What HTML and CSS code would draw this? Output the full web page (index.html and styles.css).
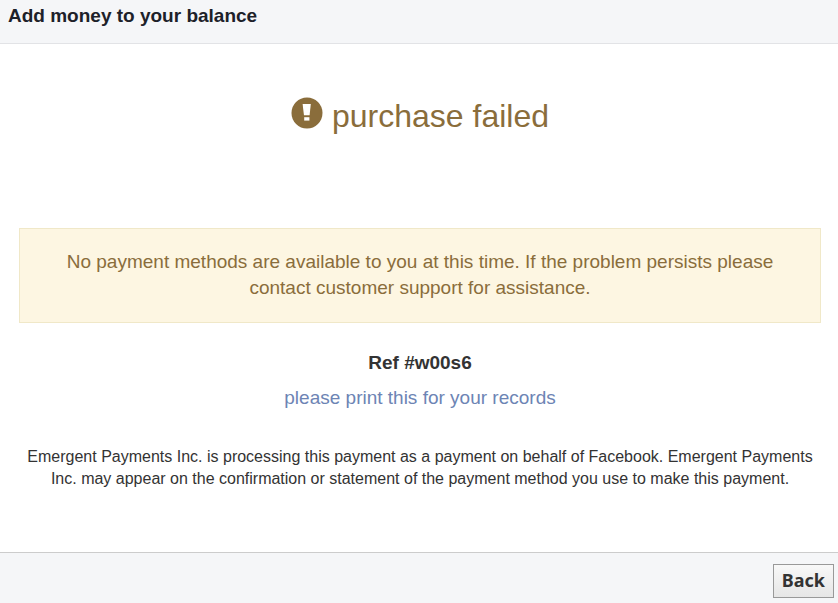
FILE: index.html
```html
<!DOCTYPE html>
<html lang="en">
<head>
  <meta charset="UTF-8">
  <meta name="viewport" content="width=device-width, initial-scale=1.0">
  <title>Add money to your balance</title>
  <link rel="stylesheet" href="styles.css">
</head>
<body>

  <header class="header">
    <h1>Add money to your balance</h1>
  </header>

  <main class="content">
    <h2 class="status">
      <svg class="status-icon" viewBox="0 0 32 32" aria-hidden="true">
        <circle cx="16" cy="16" r="15.5" fill="#8a6d3b"/>
        <path d="M11.6 7h8.2l-1.2 11.2h-5.6z" fill="#fff"/>
        <path d="M13.2 20.2h5.2v3.4h-5.2z" fill="#fff"/>
      </svg>
      purchase failed
    </h2>

    <div class="alert">
      No payment methods are available to you at this time. If the problem persists please contact customer support for assistance.
    </div>

    <p class="ref">Ref #w00s6</p>
    <a class="print" href="#">please print this for your records</a>

    <p class="note">Emergent Payments Inc. is processing this payment as a payment on behalf of Facebook. Emergent Payments Inc. may appear on the confirmation or statement of the payment method you use to make this payment.</p>
  </main>

  <footer class="footer">
    <button type="button" class="btn-back">Back</button>
  </footer>

</body>
</html>
```

FILE: styles.css
```css
body {
  margin: 0;
  min-height: 100vh;
  display: flex;
  flex-direction: column;
  font-family: "Liberation Sans", Arial, sans-serif;
  background-color: #fff;
  color: #333;
}

h1, h2, p {
  margin: 0;
}

.header {
  padding: 4px 8px 15px;
  background-color: #f5f6f8;
  border-bottom: 1px solid #e2e3e6;
}

.header h1 {
  font-size: 19px;
  line-height: 24px;
  font-weight: bold;
  color: #1d2129;
}

.content {
  flex: 1;
  padding: 48px 17px 0 19px;
  text-align: center;
}

.status {
  display: flex;
  justify-content: center;
  gap: 9px;
  font-size: 32px;
  line-height: 48px;
  font-weight: normal;
  color: #8a6d3b;
}

.status-icon {
  width: 32px;
  height: 32px;
  margin-top: 5px;
}

.alert {
  margin-top: 88px;
  padding: 20px 40px 21px;
  border: 1px solid #f0e8c8;
  background-color: #fdf6e2;
  color: #8a6d3b;
  font-size: 19px;
  line-height: 26px;
}

.ref {
  margin-top: 27px;
  font-size: 19px;
  line-height: 26px;
  font-weight: bold;
}

.print {
  display: block;
  margin-top: 9px;
  font-size: 19px;
  line-height: 26px;
  color: #6d84b4;
  text-decoration: none;
}

.note {
  margin-top: 35px;
  font-size: 16px;
  line-height: 22px;
}

.footer {
  display: flex;
  justify-content: flex-end;
  padding: 11px 4px 5px;
  background-color: #f5f6f8;
  border-top: 1px solid #ccc;
}

.btn-back {
  padding: 1px 8px 3px;
  border: 1px solid #999;
  background: linear-gradient(#f8f8f8, #e6e6e6);
  color: #333;
  font-family: "Noto Sans", sans-serif;
  font-size: 18px;
  line-height: 28px;
  font-weight: bold;
  cursor: pointer;
}
```
